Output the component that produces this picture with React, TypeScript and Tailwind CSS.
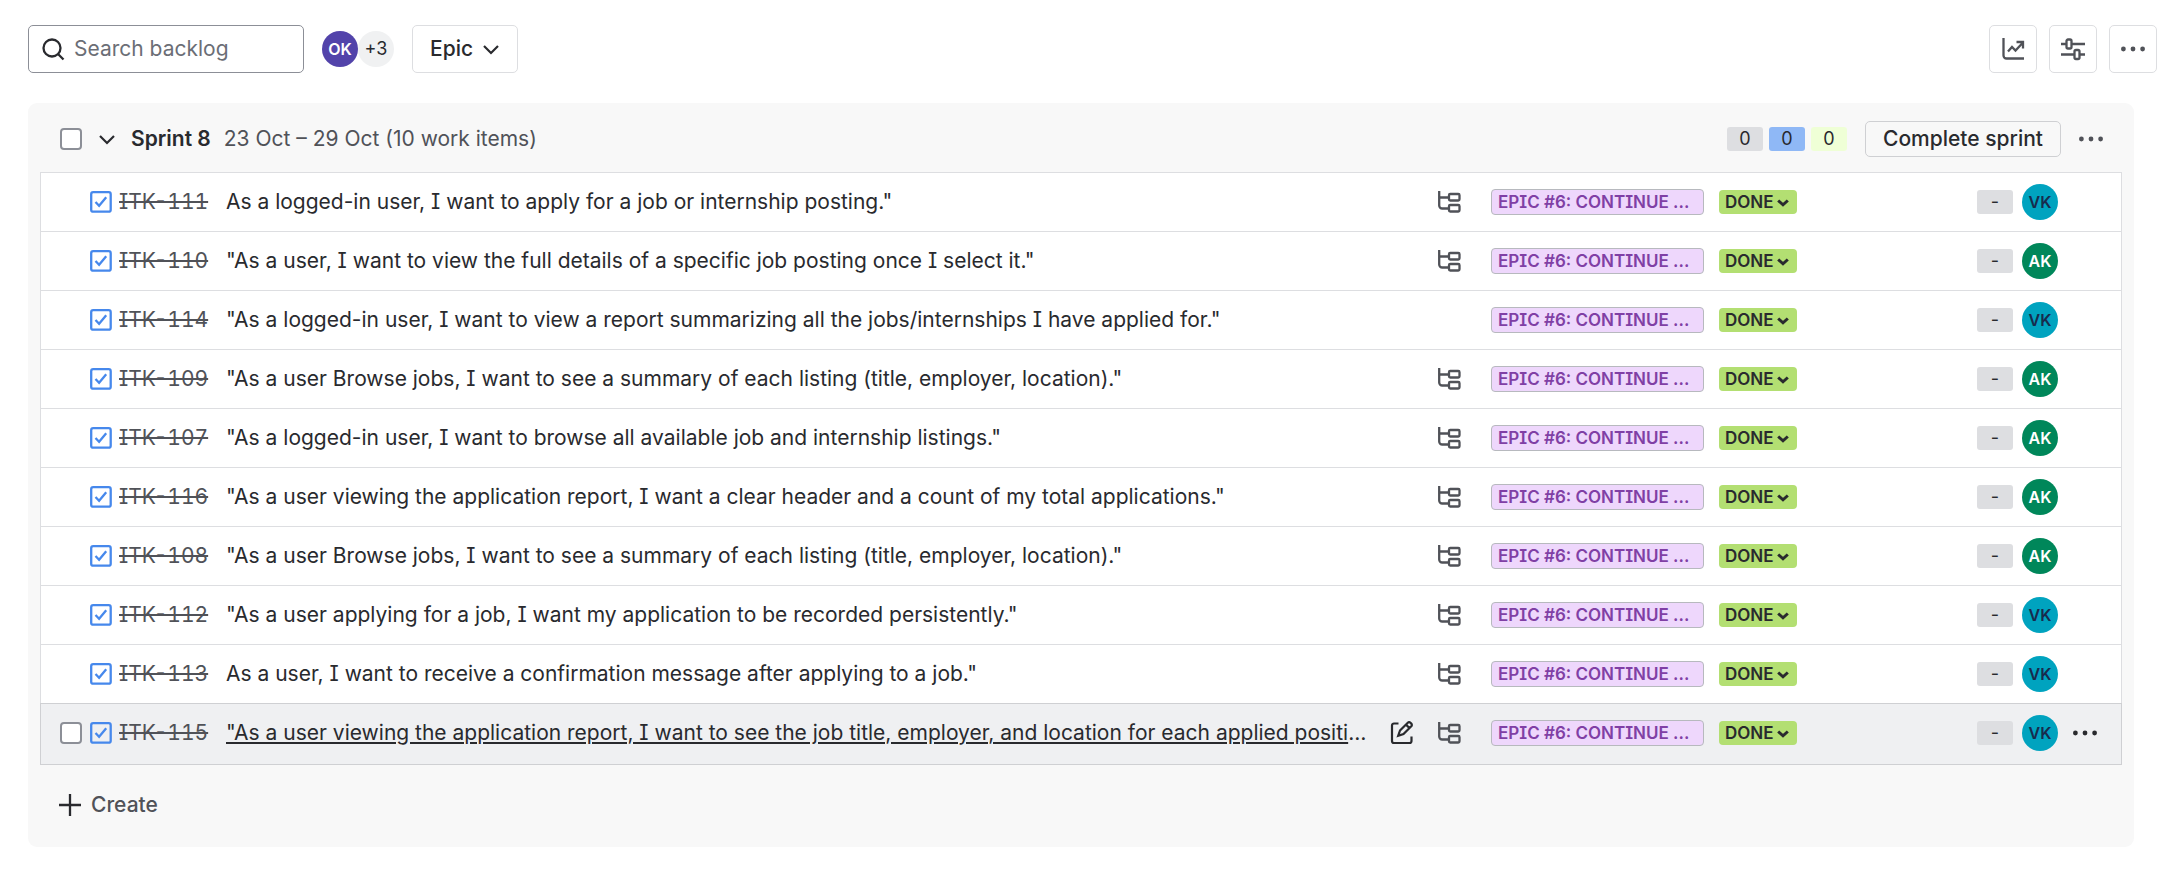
import React from "react";

type Row = { id: string; title: string; sub: boolean; who: "VK" | "AK"; active?: boolean };

const rows: Row[] = [
  { id: "ITK-111", title: 'As a logged-in user, I want to apply for a job or internship posting."', sub: true, who: "VK" },
  { id: "ITK-110", title: '"As a user, I want to view the full details of a specific job posting once I select it."', sub: true, who: "AK" },
  { id: "ITK-114", title: '"As a logged-in user, I want to view a report summarizing all the jobs/internships I have applied for."', sub: false, who: "VK" },
  { id: "ITK-109", title: '"As a user Browse jobs, I want to see a summary of each listing (title, employer, location)."', sub: true, who: "AK" },
  { id: "ITK-107", title: '"As a logged-in user, I want to browse all available job and internship listings."', sub: true, who: "AK" },
  { id: "ITK-116", title: '"As a user viewing the application report, I want a clear header and a count of my total applications."', sub: true, who: "AK" },
  { id: "ITK-108", title: '"As a user Browse jobs, I want to see a summary of each listing (title, employer, location)."', sub: true, who: "AK" },
  { id: "ITK-112", title: '"As a user applying for a job, I want my application to be recorded persistently."', sub: true, who: "VK" },
  { id: "ITK-113", title: 'As a user, I want to receive a confirmation message after applying to a job."', sub: true, who: "VK" },
  { id: "ITK-115", title: '"As a user viewing the application report, I want to see the job title, employer, and location for each applied position."', sub: true, who: "VK", active: true },
];

function Chevron({ bold }: { bold?: boolean }) {
  return bold ? (
    <svg aria-hidden="true" viewBox="0 0 12 12" className="size-3 shrink-0" fill="none" stroke="currentColor" strokeWidth="3">
      <path d="M1.200 4.500L6 8.800l4.800-4.300" />
    </svg>
  ) : (
    <svg aria-hidden="true" viewBox="0 0 18 18" className="size-[18px] shrink-0" fill="none" stroke="currentColor" strokeWidth="2.200">
      <path d="M2 6l7 7 7-7" />
    </svg>
  );
}

function Dots() {
  return (
    <svg aria-hidden="true" viewBox="0 0 24 24" className="size-6" fill="currentColor">
      <circle cx="2.4" cy="12" r="2.4" />
      <circle cx="12" cy="12" r="2.4" />
      <circle cx="21.6" cy="12" r="2.4" />
    </svg>
  );
}

function TaskIcon() {
  return (
    <svg role="img" aria-label="Task" viewBox="0 0 24 24" className="size-6 shrink-0" fill="none" stroke="#4688ec" strokeWidth="2.300">
      <rect x="3.200" y="2.200" width="19.500" height="19.500" rx="2" />
      <path d="M7.500 12l3.600 3.700L18.200 7.200" />
    </svg>
  );
}

function SubtaskIcon() {
  return (
    <svg role="img" aria-label="Subtasks" viewBox="0 0 24 24" className="size-6" fill="none" stroke="currentColor" strokeWidth="2.300">
      <path d="M2.200 1v14.500a3 3 0 0 0 3 3H12M2.200 7.500H12" />
      <rect x="12" y="4" width="10.500" height="6.500" rx="1.200" />
      <rect x="12" y="15" width="10.500" height="6.500" rx="1.200" />
    </svg>
  );
}

function EditIcon() {
  return (
    <svg aria-hidden="true" viewBox="0 0 24 24" className="size-6" fill="none" stroke="currentColor" strokeWidth="2.200">
      <path d="M8.500 2.500H4a2 2 0 0 0-2 2v15.500a2 2 0 0 0 2 2h15.500a2 2 0 0 0 2-2v-4.500" />
      <path d="M10 9.500l7.800-7.800a1.800 1.800 0 0 1 2.600 0l.9.9a1.800 1.800 0 0 1 0 2.600L13.500 13 8.200 14.800z M16 3.600l3.400 3.400" />
    </svg>
  );
}

function Avatar({ who }: { who: Row["who"] | "OK" }) {
  const tone = who === "VK" ? "bg-[#00a3bf] text-[#172b4d]" : who === "AK" ? "bg-[#00875a] text-white" : "bg-[#5243aa] text-white";
  return <span className={`flex size-9 shrink-0 items-center justify-center rounded-full text-base font-semibold ${tone}`}>{who}</span>;
}

function Box({ label }: { label: string }) {
  return (
    <input
      type="checkbox"
      aria-label={label}
      className="size-[22px] shrink-0 appearance-none rounded-[4px] border-2 border-[#8c8f97] bg-white checked:bg-[#1868db]"
    />
  );
}

const toolButton = "flex size-12 items-center justify-center rounded-[5px] border border-[#dddee1] bg-white text-[#505258]";

export default function App() {
  return (
    <main className="bg-white pb-7 pl-7 font-['Inter',sans-serif] text-[21px] leading-7 text-[#292a2e] [font-feature-settings:'cv08']">
      <div className="flex items-center justify-between pt-[25px] pr-[9px]">
        <div className="flex items-center">
          <label className="flex h-12 w-[276px] items-center gap-[9px] rounded-[5px] border border-[#8c8f97] pl-3">
            <svg aria-hidden="true" viewBox="0 0 24 24" className="size-6 shrink-0" fill="none" stroke="currentColor" strokeWidth="2.300">
              <circle cx="11" cy="11" r="8.500" />
              <path d="M17 17l5.500 5.500" />
            </svg>
            <input type="search" aria-label="Search backlog" placeholder="Search backlog" className="w-full min-w-0 outline-none placeholder:text-[#6b6e76]" />
          </label>
          <div className="ml-[18px] flex items-center">
            <Avatar who="OK" />
            <button type="button" className="flex size-9 items-center justify-center rounded-full bg-[#f0f1f2] text-lg">+3</button>
          </div>
          <button type="button" className="ml-[18px] flex h-12 items-center gap-[9px] rounded-[5px] border border-[#dddee1] px-[17px] font-medium">
            Epic
            <Chevron />
          </button>
        </div>
        <div className="flex gap-3">
          <button type="button" aria-label="Insights" className={toolButton}>
            <svg aria-hidden="true" viewBox="0 0 24 24" className="size-6" fill="none" stroke="currentColor" strokeWidth="2.300">
              <path d="M2.500 1v17.500a3 3 0 0 0 3 3H23" />
              <path d="M7 14.500l4-4.500 3.500 3.500L22 5.500M15.500 5H22v6.500" />
            </svg>
          </button>
          <button type="button" aria-label="View settings" className={toolButton}>
            <svg aria-hidden="true" viewBox="0 0 24 24" className="size-6" fill="none" stroke="currentColor" strokeWidth="2.300">
              <path d="M0 7h5.500M10.500 7H24M0 17.500h13.500M18.500 17.500H24" />
              <rect x="5.500" y="2.500" width="5" height="9" rx="1.500" />
              <rect x="13.500" y="13" width="5" height="9" rx="1.500" />
            </svg>
          </button>
          <button type="button" aria-label="More" className={toolButton}>
            <Dots />
          </button>
        </div>
      </div>

      <section className="mt-[30px] mr-8 rounded-[9px] bg-[#f8f8f8] px-3 pb-5">
        <header className="flex h-[69px] items-center pt-[3px] pr-[19px] pl-5">
          <Box label="Select all work items in Sprint 8" />
          <button type="button" aria-label="Collapse sprint" className="ml-[13px] flex size-6 items-center justify-center">
            <Chevron />
          </button>
          <h2 className="ml-3 font-semibold">Sprint 8</h2>
          <span className="ml-[13px] text-[#505258]">23 Oct – 29 Oct (10 work items)</span>
          <div className="ml-auto flex gap-[6px] text-lg leading-6">
            <span className="w-9 rounded-[3px] bg-[#dddee1] text-center">0</span>
            <span className="w-9 rounded-[3px] bg-[#8fb8f6] text-center">0</span>
            <span className="w-9 rounded-[3px] bg-[#efffd6] text-center">0</span>
          </div>
          <button type="button" className="ml-[18px] flex h-9 items-center rounded-[5px] border border-[#cfd0d3] px-[17px] font-medium">
            Complete sprint
          </button>
          <button type="button" aria-label="Sprint actions" className="ml-[18px] text-[#505258]">
            <Dots />
          </button>
        </header>

        <ul className="border border-[#dddee1] bg-white">
          {rows.map((row) => (
            <li
              key={row.id}
              className={`flex items-center pr-6 pl-[19px] ${row.active ? "-m-px h-[62px] border border-[#cfd0d3] bg-[#eff0f2] pb-[2px]" : "h-[59px] border-b border-[#dddee1]"}`}
            >
              <span className="flex w-7 shrink-0">{row.active && <Box label={`Select ${row.id}`} />}</span>
              <TaskIcon />
              <a href={`#${row.id}`} className="ml-[7px] w-[107px] shrink-0 whitespace-nowrap text-[#505258] line-through [font-feature-settings:'cv08','tnum']">
                {row.id}
              </a>
              <div className="flex min-w-0 flex-1 items-center">
                <a href={`#${row.id}`} className={`truncate ${row.active ? "underline" : ""}`}>
                  {row.title}
                </a>
              </div>
              {row.active && (
                <button type="button" aria-label="Edit summary" className="ml-[18px]">
                  <EditIcon />
                </button>
              )}
              <span className="ml-[23px] w-6 shrink-0 text-[#505258]">{row.sub && <SubtaskIcon />}</span>
              <span className="ml-[30px] h-[26px] w-[213px] shrink-0 truncate rounded-[4px] border border-[#b7b9be] bg-[#eed7fc] px-[6px] text-[17px] leading-6 font-semibold text-[#803fa5]">
                EPIC #6: CONTINUE ...
              </span>
              <button type="button" className="ml-[15px] flex h-6 w-[78px] shrink-0 items-center justify-between rounded-[4px] bg-[#b3df72] pr-2 pl-[6px] text-[17px] font-semibold">
                DONE
                <Chevron bold />
              </button>
              <span className="ml-[180px] w-9 shrink-0 rounded-[3px] bg-[#dddee1] text-center text-lg leading-6">-</span>
              <span className="ml-[9px]">
                <Avatar who={row.who} />
              </span>
              <span className="ml-[15px] flex w-6 shrink-0">
                {row.active && (
                  <button type="button" aria-label="Work item actions">
                    <Dots />
                  </button>
                )}
              </span>
            </li>
          ))}
        </ul>

        <button type="button" className="mt-[18px] ml-[18px] flex h-11 items-center gap-[9px] font-medium text-[#505258]">
          <svg aria-hidden="true" viewBox="0 0 24 24" className="size-6 text-[#292a2e]" fill="none" stroke="currentColor" strokeWidth="2.300">
            <path d="M12 1v22M1 12h22" />
          </svg>
          Create
        </button>
      </section>
    </main>
  );
}
